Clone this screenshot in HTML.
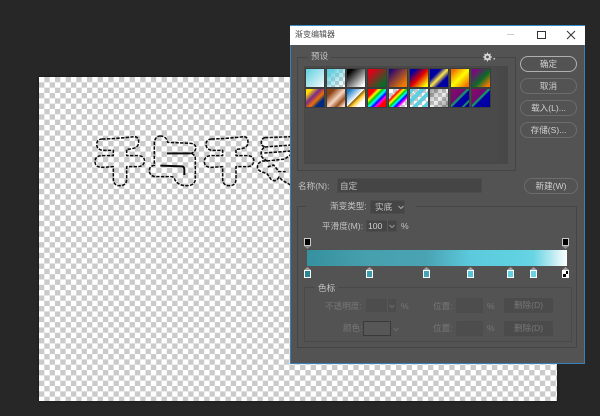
<!DOCTYPE html>
<html lang="zh">
<head>
<meta charset="utf-8">
<style>
html,body{margin:0;padding:0;width:600px;height:416px;overflow:hidden;background:#272727}
*{box-sizing:border-box}
body{position:relative;font-family:"Liberation Sans","Noto Sans CJK SC",sans-serif;font-size:8.6px;color:#c4c4c4}
#all{position:absolute;left:0;top:0;width:600px;height:416px;filter:blur(.3px)}
.a{position:absolute}
.t{position:absolute;white-space:nowrap;line-height:12px;height:12px}
#canvas{left:39px;top:77px;width:518px;height:324px;background:repeating-conic-gradient(#cacaca 0 25%,#fff 0 50%) 0 0/10.67px 10.67px;box-shadow:0 0 2px #111}
#dlg{left:290px;top:25px;width:295px;height:339px;background:#535353;border:1px solid #3a7fb5;border-top:0}
#bar{left:290px;top:25px;width:295px;height:20px;background:#fff;border-top:1px solid #3a8cc8}
.box{position:absolute;border:1px solid #454545}
.btn{position:absolute;width:57px;height:16px;border:1px solid #777;border-radius:8px;text-align:center;line-height:14px;color:#d0d0d0;background:#535353}
.inp{position:absolute;background:#454545;border:1px solid #4c4c4c}
.lab{background:#535353;padding:0 3px}
.dim{color:#777}
.sw{position:absolute;width:20px;height:20px;border:1px solid #3c3c3c}
.stop{position:absolute;width:7px;height:8px;top:270px;border:1px solid #fff}
.stop:before{content:"";position:absolute;left:-1px;top:-4px;width:7px;height:3px;background:#a0a0a0;clip-path:polygon(50% 0,100% 100%,0 100%)}
.op{position:absolute;top:238px;width:7px;height:8px;background:#000;border:1px solid #c8c8c8}
.op:after{content:"";position:absolute;left:-1px;top:7px;width:7px;height:3px;background:#8a8a8a;clip-path:polygon(0 0,100% 0,50% 100%)}
.del{position:absolute;width:49px;height:15px;background:#4b4b4b;color:#777;text-align:center;line-height:15px}
.chk{background:repeating-conic-gradient(#c8c8c8 0 25%,#fff 0 50%) 0 0/8px 8px}
</style>
</head>
<body>
<div id="all">
<div id="canvas" class="a"></div>
<svg class="a" style="left:0;top:0" width="600" height="416" viewBox="0 0 600 416">
<g transform="translate(85 125) scale(.3333)" fill="none" stroke="#0a0a0a" stroke-width="4.6" stroke-dasharray="10 4" stroke-linejoin="round">
<path d="M52 42C80 42 120 38 148 35C162 35 162 50 160 58C156 70 140 72 125 73L125 92L160 92C176 93 180 102 178 110C176 122 168 125 155 125L125 125L125 162C125 176 118 182 105 182C92 182 85 176 85 162L85 125L50 127C36 127 30 120 30 110C30 98 38 92 50 92L85 92L85 76L52 76C40 74 35 66 35 58C35 48 42 42 52 42Z"/>
<path transform="translate(328 0)" d="M52 42C80 42 120 38 148 35C162 35 162 50 160 58C156 70 140 72 125 73L125 92L160 92C176 93 180 102 178 110C176 122 168 125 155 125L125 125L125 162C125 176 118 182 105 182C92 182 85 176 85 162L85 125L50 127C36 127 30 120 30 110C30 98 38 92 50 92L85 92L85 76L52 76C40 74 35 66 35 58C35 48 42 42 52 42Z"/>
<path d="M225 33C238 33 246 40 248 52L318 55C330 57 334 64 332 72C330 80 324 84 316 85C326 87 331 92 331 102L331 162C331 176 320 182 305 182C288 182 276 176 270 165C268 158 264 155 258 155L210 155C198 153 192 145 193 135C194 126 200 122 208 121L208 52C210 40 216 33 225 33Z"/>
<path d="M540 38L620 35M540 38C528 40 526 55 532 62L540 66C527 72 526 88 532 98L546 108L532 108C518 112 514 126 520 134C528 142 538 142 546 146L558 163C566 170 576 168 582 156L592 166L620 182M540 66L620 60M538 84L620 78M546 108L600 102L616 90M548 126L566 120L582 140L602 140"/>
<path stroke-dasharray="none" stroke-width="6" d="M246 85L316 85M226 122L292 124Q298 126 298 134L298 150"/>
</g>
</svg>

<div id="dlg" class="a"></div>
<div id="bar" class="a"></div>
<div class="t" style="left:295px;top:29px;color:#4a4a4a;font-size:8px">渐变编辑器</div>
<div class="a" style="left:507px;top:34px;width:7px;height:1px;background:#ccc"></div>
<div class="a" style="left:537px;top:31px;width:9px;height:8px;border:1px solid #333"></div>
<svg class="a" style="left:566px;top:30px" width="10" height="10" viewBox="0 0 10 10"><path d="M1 1L9 9M9 1L1 9" stroke="#333" stroke-width="1" fill="none"/></svg>

<!-- presets -->
<div class="box" style="left:297px;top:57px;width:219px;height:114px"></div>
<div class="t lab" style="left:308px;top:50px">预设</div>
<svg class="a" style="left:482px;top:52px;background:#535353" width="14" height="10" viewBox="0 0 14 10"><circle cx="5.5" cy="5" r="2.4" fill="#535353" stroke="#d8d8d8" stroke-width="2"/><path d="M5.5 .5V2M5.5 8V9.5M1 5H2.5M8.5 5H10M2.3 1.8L3.4 2.9M8.7 1.8L7.6 2.9M2.3 8.2L3.4 7.1M8.7 8.2L7.6 7.1" stroke="#d8d8d8"/><rect x="11.5" y="6" width="1.5" height="1.5" fill="#c8c8c8"/></svg>
<div class="a" style="left:304px;top:66px;width:204px;height:98px;background:#4a4a4a;border:1px solid #474747"></div>
<div class="a" style="left:497px;top:67px;width:10px;height:96px;background:#484848"></div>

<div class="sw" style="left:305px;top:68px;background:linear-gradient(135deg,#5ecfe0,#f4fafb)"></div>
<div class="sw chk" style="left:326px;top:68px"><div style="width:100%;height:100%;background:linear-gradient(135deg,#5ecfe0 10%,rgba(94,207,224,0) 95%)"></div></div>
<div class="sw" style="left:346px;top:68px;background:linear-gradient(135deg,#000 15%,#fff 90%)"></div>
<div class="sw" style="left:367px;top:68px;background:linear-gradient(135deg,#e0001a 15%,#0a6a2a 85%)"></div>
<div class="sw" style="left:388px;top:68px;background:linear-gradient(135deg,#2a0a6e 10%,#f07a00 85%)"></div>
<div class="sw" style="left:409px;top:68px;background:linear-gradient(135deg,#0000a0 15%,#e00000 50%,#ffff00 90%)"></div>
<div class="sw" style="left:429px;top:68px;background:linear-gradient(135deg,#0000a0 30%,#ffe840 50%,#0000a0 70%)"></div>
<div class="sw" style="left:450px;top:68px;background:linear-gradient(135deg,#f07000 10%,#ffff00 50%,#f07000 90%)"></div>
<div class="sw" style="left:471px;top:68px;background:linear-gradient(135deg,#7a0a7a 15%,#0a6a2a 55%,#f07a00 90%)"></div>

<div class="sw" style="left:305px;top:88px;background:linear-gradient(135deg,#ffe000 15%,#7a2a8a 40%,#f07000 60%,#002a80 76%)"></div>
<div class="sw" style="left:326px;top:88px;background:linear-gradient(135deg,#8a4010 20%,#f5d5c0 52%,#9a5020 75%,#f5d5c0 92%)"></div>
<div class="sw" style="left:346px;top:88px;background:linear-gradient(135deg,#1a7ac8 10%,#fff 49%,#8a5a00 50%,#ffd040 62%,#fff 78%)"></div>
<div class="sw" style="left:367px;top:88px;background:linear-gradient(135deg,#f00 22%,#ff0 32%,#0c0 42%,#0ff 52%,#00f 62%,#f0f 70%,#f00 80%)"></div>
<div class="sw chk" style="left:388px;top:88px"><div style="width:100%;height:100%;background:linear-gradient(135deg,transparent 25%,#f00 32%,#ff0 42%,#0c0 50%,#0ff 58%,#00f 66%,#f0f 74%,transparent 82%)"></div></div>
<div class="sw chk" style="left:409px;top:88px"><div style="width:100%;height:100%;background:repeating-linear-gradient(135deg,#5ecfe0 0 4px,transparent 4px 7px)"></div></div>
<div class="sw chk" style="left:429px;top:88px"><div style="width:100%;height:100%;background:linear-gradient(135deg,rgba(0,0,0,.4),rgba(0,0,0,.05) 50%,rgba(0,0,0,.4))"></div></div>
<div class="sw" style="left:450px;top:88px;background:linear-gradient(135deg,#8a0a6a 0,#700a70 42%,#1a8a6a 44%,#1a8a6a 52%,#0000a8 54%,#0000a0 78%,#1a8a6a 80%,#1a8a6a 86%,#0000a0 88%)"></div>
<div class="sw" style="left:471px;top:88px;background:linear-gradient(135deg,#8a0a6a 0,#700a70 42%,#1a8a6a 44%,#1a8a6a 52%,#0000a8 54%,#0000a0 100%)"></div>

<!-- buttons -->
<div class="btn" style="left:520px;top:56px;border-color:#b0b0b0">确定</div>
<div class="btn" style="left:520px;top:78px;border-color:#6c6c6c">取消</div>
<div class="btn" style="left:520px;top:100px;border-color:#6c6c6c">载入(L)...</div>
<div class="btn" style="left:520px;top:122px;border-color:#6c6c6c">存储(S)...</div>
<div class="btn" style="left:524px;top:178px;width:54px;border-color:#6c6c6c">新建(W)</div>

<!-- name -->
<div class="t" style="left:298px;top:180px">名称(N):</div>
<div class="inp" style="left:337px;top:178px;width:145px;height:15px"></div>
<div class="t" style="left:340px;top:180px">自定</div>

<!-- gradient group -->
<div class="box" style="left:297px;top:206px;width:280px;height:142px"></div>
<div class="a" style="left:306px;top:200px;width:110px;height:12px;background:#535353"></div>
<div class="t" style="left:330px;top:200px">渐变类型:</div>
<div class="inp" style="left:370px;top:200px;width:35px;height:14px"></div>
<div class="t" style="left:375px;top:201px">实底</div>
<svg class="a" style="left:398px;top:205px" width="6" height="5" viewBox="0 0 6 5"><path d="M.5 1L3 3.5L5.5 1" stroke="#aaa" fill="none"/></svg>

<div class="t" style="left:322px;top:220px">平滑度(M):</div>
<div class="inp" style="left:366px;top:220px;width:31px;height:12px"></div>
<div class="a" style="left:387px;top:220px;width:1px;height:12px;background:#585858"></div>
<div class="t" style="left:368px;top:220px;color:#d0d0d0">100</div>
<svg class="a" style="left:389px;top:224px" width="6" height="5" viewBox="0 0 6 5"><path d="M.5 1L3 3.5L5.5 1" stroke="#999" fill="none"/></svg>
<div class="t" style="left:401px;top:220px">%</div>

<div class="op" style="left:304px"></div>
<div class="op" style="left:562px"></div>
<div class="a" style="left:307px;top:250px;width:260px;height:16px;background:linear-gradient(90deg,#35919f 0,#47a0ae 24%,#4aa3b3 46%,#5bcadc 63%,#60d1e1 80%,#68d4e3 87%,#a9e6ee 93%,#fff 100%)"></div>

<div class="stop" style="left:304px;background:#2a8794"></div>
<div class="stop" style="left:366px;background:#3c9cab"></div>
<div class="stop" style="left:423px;background:#45a5b5"></div>
<div class="stop" style="left:467px;background:#57c4d6"></div>
<div class="stop" style="left:507px;background:#60d1e1"></div>
<div class="stop" style="left:530px;background:#68d4e3"></div>
<div class="stop" style="left:562px;background:repeating-conic-gradient(#000 0 25%,#fff 0 50%) 0 0/6px 6px"></div>

<!-- color stops -->
<div class="box" style="left:304px;top:287px;width:268px;height:55px;border-color:#494949"></div>
<div class="t lab" style="left:315px;top:282px">色标</div>

<div class="t dim" style="left:325px;top:300px">不透明度:</div>
<div class="inp" style="left:366px;top:299px;width:30px;height:13px;background:#4d4d4d"></div>
<div class="a" style="left:387px;top:299px;width:1px;height:13px;background:#575757"></div>
<svg class="a" style="left:389px;top:304px" width="6" height="5" viewBox="0 0 6 5"><path d="M.5 1L3 3.5L5.5 1" stroke="#6c6c6c" fill="none"/></svg>
<div class="t dim" style="left:401px;top:300px">%</div>
<div class="t dim" style="left:433px;top:300px">位置:</div>
<div class="inp" style="left:456px;top:298px;width:27px;height:15px;background:#4d4d4d"></div>
<div class="t dim" style="left:487px;top:300px">%</div>
<div class="del" style="left:504px;top:298px">删除(D)</div>

<div class="t dim" style="left:343px;top:322px">颜色:</div>
<div class="a" style="left:363px;top:321px;width:28px;height:15px;background:#575757;border:1px solid #3a3a3a"></div>
<svg class="a" style="left:393px;top:327px" width="6" height="5" viewBox="0 0 6 5"><path d="M.5 1L3 3.5L5.5 1" stroke="#6c6c6c" fill="none"/></svg>
<div class="t dim" style="left:433px;top:322px">位置:</div>
<div class="inp" style="left:456px;top:321px;width:27px;height:15px;background:#4d4d4d"></div>
<div class="t dim" style="left:487px;top:322px">%</div>
<div class="del" style="left:504px;top:321px">删除(D)</div>
</div>
</body>
</html>
